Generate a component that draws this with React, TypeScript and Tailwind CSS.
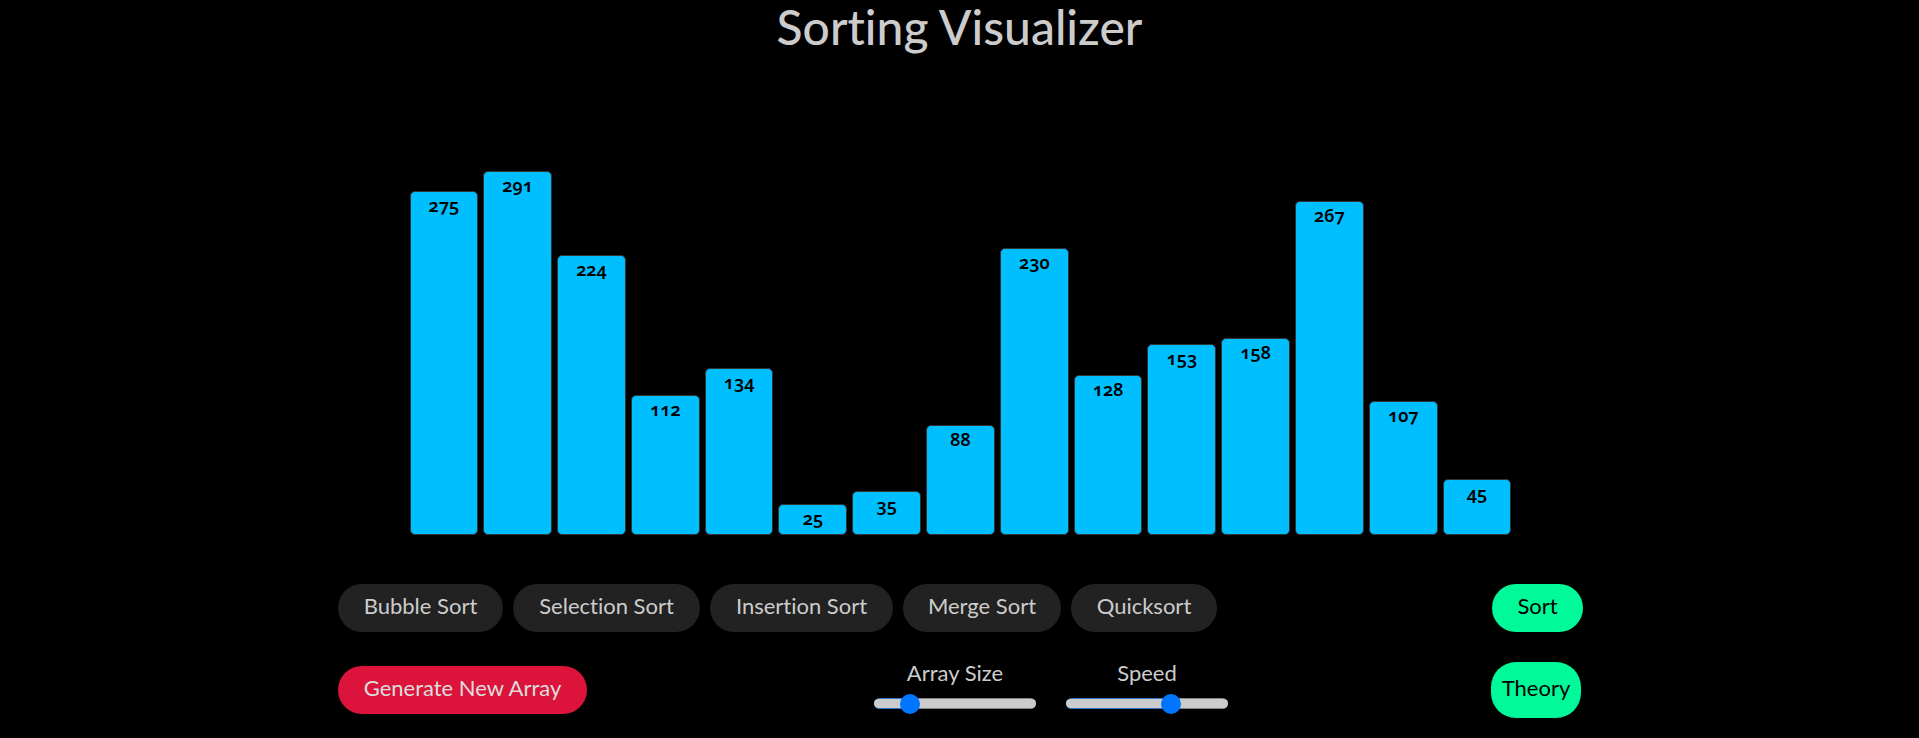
import { useState } from "react";

const values = [275, 291, 224, 112, 134, 25, 35, 88, 230, 128, 153, 158, 267, 107, 45];

const algorithms = [
  { name: "Bubble Sort", width: "w-[165px]" },
  { name: "Selection Sort", width: "w-[187px]" },
  { name: "Insertion Sort", width: "w-[183px]" },
  { name: "Merge Sort", width: "w-[158px]" },
  { name: "Quicksort", width: "w-[146px]" },
];

function Bar({ value }: { value: number }) {
  return (
    <div
      className="min-w-0 flex-1 rounded-[5px] border border-[#333] bg-[#00bfff] text-center font-['Noto_Sans','Open_Sans',sans-serif] text-[18px] leading-[26px] font-semibold text-black oldstyle-nums"
      style={{ height: Math.ceil(value * 1.25 - 0.5) }}
    >
      {value}
    </div>
  );
}

function Slider({ id, label, initial }: { id: string; label: string; initial: number }) {
  const [value, setValue] = useState(initial);
  const lines = `linear-gradient(to right, #2f73c8 ${value}%, #858585 ${value}%)`;
  return (
    <div className="flex w-[162px] flex-col items-center">
      <label htmlFor={id} className="leading-[26px]">
        {label}
      </label>
      <input
        id={id}
        type="range"
        min={0}
        max={100}
        value={value}
        onChange={(e) => setValue(Number(e.target.value))}
        style={{ backgroundImage: lines }}
        className="mt-3 h-[11px] w-full cursor-pointer appearance-none rounded-full py-px [&::-webkit-slider-runnable-track]:h-[9px] [&::-webkit-slider-runnable-track]:rounded-full [&::-webkit-slider-runnable-track]:bg-[#ccc] [&::-webkit-slider-thumb]:-mt-[5px] [&::-webkit-slider-thumb]:size-5 [&::-webkit-slider-thumb]:appearance-none [&::-webkit-slider-thumb]:rounded-full [&::-webkit-slider-thumb]:bg-[#0075ff]"
      />
    </div>
  );
}

export default function App() {
  const [selected, setSelected] = useState("");
  return (
    <div className="min-h-screen bg-black font-['Lato',sans-serif] text-[22px] text-[#ccc] [font-variant-ligatures:none]">
      <h1 className="text-center text-[48px] leading-[54px] font-medium">Sorting Visualizer</h1>

      <main className="mx-auto w-full max-w-[1247px] pl-[2px]">
        <section aria-label="Array" className="mx-auto mt-[81px] flex h-[400px] max-w-[1102px] items-end gap-[5px]">
          {values.map((value, index) => (
            <Bar key={index} value={value} />
          ))}
        </section>

        <div className="mt-[49px] flex items-center justify-between">
          <div className="flex gap-[10px]">
            {algorithms.map(({ name, width }) => (
              <button
                key={name}
                type="button"
                aria-pressed={selected === name}
                onClick={() => setSelected(name)}
                className={`${width} h-12 cursor-pointer rounded-full bg-[#222] pb-[5px]`}
              >
                {name}
              </button>
            ))}
          </div>
          <button type="button" className="h-12 w-[91px] cursor-pointer rounded-full bg-[#00fa9a] pb-[5px] text-black">
            Sort
          </button>
        </div>

        <div className="mt-[28px] flex items-start justify-between">
          <div className="flex w-[536px] items-center">
            <button type="button" className="mt-[6px] h-12 w-[249px] cursor-pointer rounded-full bg-[#dc143c] pb-[5px] text-[#ddd]">
              Generate New Array
            </button>
          </div>
          <div className="flex flex-1 items-start gap-[30px]">
            <Slider id="array-size" label="Array Size" initial={18} />
            <Slider id="speed" label="Speed" initial={67} />
          </div>
          <button
            type="button"
            className="mt-[2px] mr-[2px] h-14 w-[90px] cursor-pointer rounded-[25px] bg-[#00fa9a] pb-[5px] text-black"
          >
            Theory
          </button>
        </div>
      </main>
    </div>
  );
}
